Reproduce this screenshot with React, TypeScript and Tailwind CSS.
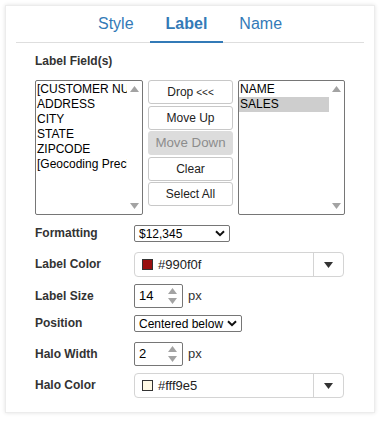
import React from 'react';

const font = { fontFamily: '"Liberation Sans", Arial, sans-serif' };

const UpTri = () => (
  <svg width="9" height="6" viewBox="0 0 9 6" className="block">
    <path d="M0 6 L4.5 0 L9 6 Z" fill="#a3a3a3" />
  </svg>
);
const DownTri = ({ color = '#a3a3a3' }: { color?: string }) => (
  <svg width="9" height="6" viewBox="0 0 9 6" className="block">
    <path d="M0 0 L9 0 L4.5 6 Z" fill={color} />
  </svg>
);

const Chevron = () => (
  <svg width="10" height="7" viewBox="0 0 10 7" className="block shrink-0">
    <path d="M1 1.2 L5 5.2 L9 1.2" fill="none" stroke="#111" strokeWidth="2" />
  </svg>
);

const ListBox: React.FC<{ items: string[]; selected?: number; width: string }> = ({ items, selected, width }) => (
  <div className={`relative h-[135px] ${width} border border-[#767676] rounded-[2px] bg-white overflow-hidden`}>
    <div className="mr-[15px] pt-[1px] overflow-hidden">
      {items.map((it, i) => (
        <div
          key={i}
          className={`h-[15px] leading-[15px] pl-[1px] whitespace-nowrap overflow-hidden text-[12px] text-black ${
            i === selected ? 'bg-[#cecece]' : ''
          }`}
        >
          {it}
        </div>
      ))}
    </div>
    <div className="absolute right-0 top-0 bottom-0 w-[15px] flex flex-col items-center justify-between py-[5px]">
      <UpTri />
      <DownTri />
    </div>
  </div>
);

const Btn: React.FC<{ children: React.ReactNode; disabled?: boolean }> = ({ children, disabled }) => (
  <div
    className={`h-[24px] flex items-center justify-center rounded-[3px] border whitespace-nowrap ${
      disabled
        ? 'bg-[#dcdcdc] border-[#dcdcdc] text-[#8c8c8c] text-[13.3px]'
        : 'bg-white border-[#c8c8c8] text-[#222] text-[12px]'
    }`}
  >
    {children}
  </div>
);

const ColorPicker: React.FC<{ color: string; label: string }> = ({ color, label }) => (
  <div className="flex h-[25px] w-[210px] border border-[#d4d4d4] rounded-[4px] bg-white">
    <div className="flex-1 flex items-center pl-[7px] gap-[5px]">
      <div className="w-[11px] h-[11px] border border-[#333]" style={{ backgroundColor: color }} />
      <span className="text-[13px] text-[#222]">{label}</span>
    </div>
    <div className="w-[30px] border-l border-[#d4d4d4] flex items-center justify-center">
      <DownTri color="#333" />
    </div>
  </div>
);

const NumberBox: React.FC<{ value: string }> = ({ value }) => (
  <div className="flex items-center gap-[5px]">
    <div className="relative h-[24px] w-[49px] border border-[#767676] rounded-[2px] bg-white flex items-center pl-[4px] text-[13px] text-black">
      {value}
      <div className="absolute right-[5px] top-[3px] bottom-[3px] flex flex-col justify-between">
        <UpTri />
        <DownTri />
      </div>
    </div>
    <span className="text-[13px] text-[#333]">px</span>
  </div>
);

const Select: React.FC<{ value: string; width: string }> = ({ value, width }) => (
  <div
    className={`h-[17px] ${width} border border-[#767676] rounded-[2px] bg-white flex items-center justify-between pl-[4px] pr-[4px] text-[12px] text-black whitespace-nowrap overflow-hidden`}
  >
    <span className="leading-none">{value}</span>
    <Chevron />
  </div>
);

const Row: React.FC<{ label: string; children: React.ReactNode; className?: string }> = ({ label, children, className }) => (
  <div className={`flex items-center ${className ?? ''}`}>
    <div className="w-[99px] text-[12px] leading-[15px] font-bold text-[#333]">{label}</div>
    {children}
  </div>
);

export default function App() {
  return (
    <div className="w-[380px] h-[421px] bg-white pt-[5px] pl-[5px]" style={font}>
      <div className="w-[370px] h-[408px] bg-white border border-[#ececec] shadow-[0_0_4px_rgba(0,0,0,0.12)]">
        <div className="mx-[10px] flex justify-center border-b border-[#dedede] h-[37px]">
          <div className="px-4 flex items-center text-[16px] text-[#337ab7]">Style</div>
          <div className="px-4 flex items-center text-[16px] font-bold text-[#337ab7] border-b-2 border-[#337ab7] -mb-[1px]">
            Label
          </div>
          <div className="px-4 flex items-center text-[16px] text-[#337ab7]">Name</div>
        </div>

        <div className="pl-[29px]">
          <div className="mt-[11px] text-[12px] font-bold text-[#333] leading-[15px]">Label Field(s)</div>

          <div className="mt-[11px] flex gap-[5px]">
            <ListBox
              width="w-[108px]"
              items={['[CUSTOMER NUMBER]', 'ADDRESS', 'CITY', 'STATE', 'ZIPCODE', '[Geocoding Precision]']}
            />
            <div className="w-[85px] flex flex-col gap-[1.5px]">
              <Btn>
                Drop <span className="text-[10px] ml-[3px]">&lt;&lt;&lt;</span>
              </Btn>
              <Btn>Move Up</Btn>
              <Btn disabled>Move Down</Btn>
              <Btn>Clear</Btn>
              <Btn>Select All</Btn>
            </div>
            <ListBox width="w-[107px]" items={['NAME', 'SALES']} selected={1} />
          </div>

          <Row label="Formatting" className="mt-[10px]">
            <Select value="$12,345" width="w-[96px]" />
          </Row>
          <Row label="Label Color" className="mt-[10px]">
            <ColorPicker color="#990f0f" label="#990f0f" />
          </Row>
          <Row label="Label Size" className="mt-[7px]">
            <NumberBox value="14" />
          </Row>
          <Row label="Position" className="mt-[7px]">
            <Select value="Centered below" width="w-[108px]" />
          </Row>
          <Row label="Halo Width" className="mt-[10px]">
            <NumberBox value="2" />
          </Row>
          <Row label="Halo Color" className="mt-[7px]">
            <ColorPicker color="#fff9e5" label="#fff9e5" />
          </Row>
        </div>
      </div>
    </div>
  );
}
